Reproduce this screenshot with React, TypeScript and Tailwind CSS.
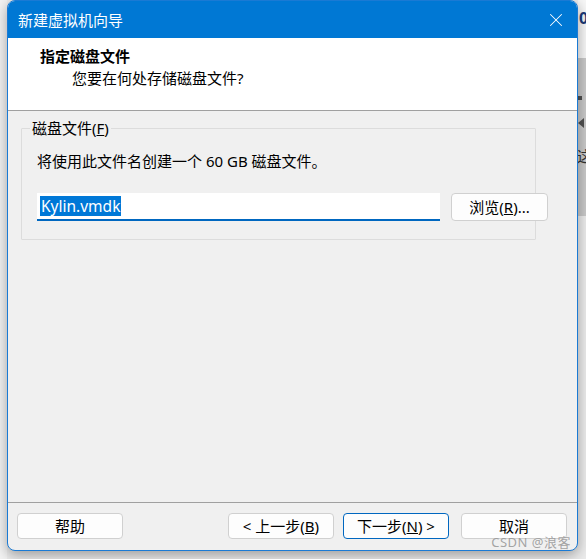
import { X } from 'lucide-react';

const font = { fontFamily: '"Noto Sans", "Noto Sans CJK SC", sans-serif' };

function Btn({ children, primary = false }: { children: React.ReactNode; primary?: boolean }) {
  return (
    <button
      className={
        primary
          ? 'w-[106px] h-[26px] rounded-[4px] bg-[#fdfdfd] border border-[#0067c0] text-[15px] leading-[24px] text-black'
          : 'w-[106px] h-[26px] rounded-[4px] bg-[#fdfdfd] border border-[#d0d0d0] text-[15px] leading-[24px] text-black'
      }
    >
      {children}
    </button>
  );
}

export default function App() {
  return (
    <div className="w-[586px] h-[559px] flex bg-[#ececec] overflow-hidden" style={font}>
      {/* left strip of desktop */}
      <div className="w-[7px] h-full bg-[#f3f3f3]" />

      {/* wizard window */}
      <div className="relative w-[571px] h-[551px] flex flex-col rounded-[8px] border border-[#1a7ad4] bg-[#f0f0f0] shadow-[0_4px_14px_rgba(0,0,0,0.35)] overflow-hidden z-10">
        {/* title bar */}
        <div className="h-[37px] shrink-0 bg-[#0078d4] flex items-center justify-between pl-[10px] pr-[10px]">
          <span className="text-white text-[15px] leading-[20px]">新建虚拟机向导</span>
          <X className="w-[22px] h-[22px] text-white" strokeWidth={1.1} />
        </div>

        {/* header */}
        <div className="h-[73px] shrink-0 bg-white border-b border-[#a0a0a0] pt-[8px]">
          <div className="pl-[32px] text-[15px] leading-[20px] font-bold text-black">指定磁盘文件</div>
          <div className="pl-[64px] mt-[2px] text-[15px] leading-[20px] text-black">您要在何处存储磁盘文件?</div>
        </div>

        {/* body */}
        <div className="flex-1 px-[13px] pt-[17px]">
          <div className="relative w-[515px] h-[112px] border border-[#dcdcdc] rounded-[1px] px-[15px] pt-[22px]">
            <span className="absolute left-[8px] top-[-11px] bg-[#f0f0f0] px-[2px] text-[15px] leading-[20px] text-black">
              磁盘文件(<span className="underline">F</span>)
            </span>
            <div className="text-[15px] leading-[20px] text-black">将使用此文件名创建一个 60 GB 磁盘文件。</div>
            <div className="mt-[22px] flex items-center gap-[11px]">
              <div className="w-[403px] h-[28px] shrink-0 bg-white border-b-2 border-[#0067c0] flex items-center pl-[3px]">
                <span className="bg-[#0078d7] text-white text-[15.5px] leading-[20px] px-[1px]">Kylin.vmdk</span>
              </div>
              <button className="w-[97px] h-[28px] shrink-0 rounded-[4px] bg-[#fdfdfd] border border-[#d0d0d0] text-[15px] leading-[24px] text-black">
                浏览(<span className="underline">R</span>)...
              </button>
            </div>
          </div>
        </div>

        {/* footer */}
        <div className="h-[48px] shrink-0 border-t border-[#a0a0a0] flex items-start pt-[10px] pl-[9px] pr-[10px]">
          <Btn>帮助</Btn>
          <div className="flex-1" />
          <div className="flex gap-[9px]">
            <Btn>&lt; 上一步(<span className="underline">B</span>)</Btn>
            <Btn primary>
              下一步(<span className="underline">N</span>) &gt;
            </Btn>
          </div>
          <div className="w-[12px]" />
          <Btn>取消</Btn>
        </div>

        <span className="absolute right-[6px] bottom-[1px] text-[13px] leading-[14px] text-[#9a9a9a]/90 tracking-[0.5px]">
          CSDN @浪客
        </span>
      </div>

      {/* right strip of desktop */}
      <div className="w-[8px] h-full flex flex-col">
        <div className="h-[58px] bg-[#f7f7f7] flex flex-col pt-[8px] pl-[1px]">
          <span className="text-[16px] leading-[20px] text-[#1d3a78] font-bold">0</span>
        </div>
        <div className="h-[158px] bg-[#c9c9c9] flex flex-col items-start pt-[38px] gap-[18px]">
          <div className="w-[4px] h-[4px] bg-[#505050]" />
          <div className="w-0 h-0 border-y-[5px] border-y-transparent border-r-[6px] border-r-[#505050]" />
          <span className="text-[15px] leading-[20px] text-[#333] -ml-[1px]">这</span>
        </div>
        <div className="flex-1 bg-[#ececec]" />
      </div>
    </div>
  );
}
